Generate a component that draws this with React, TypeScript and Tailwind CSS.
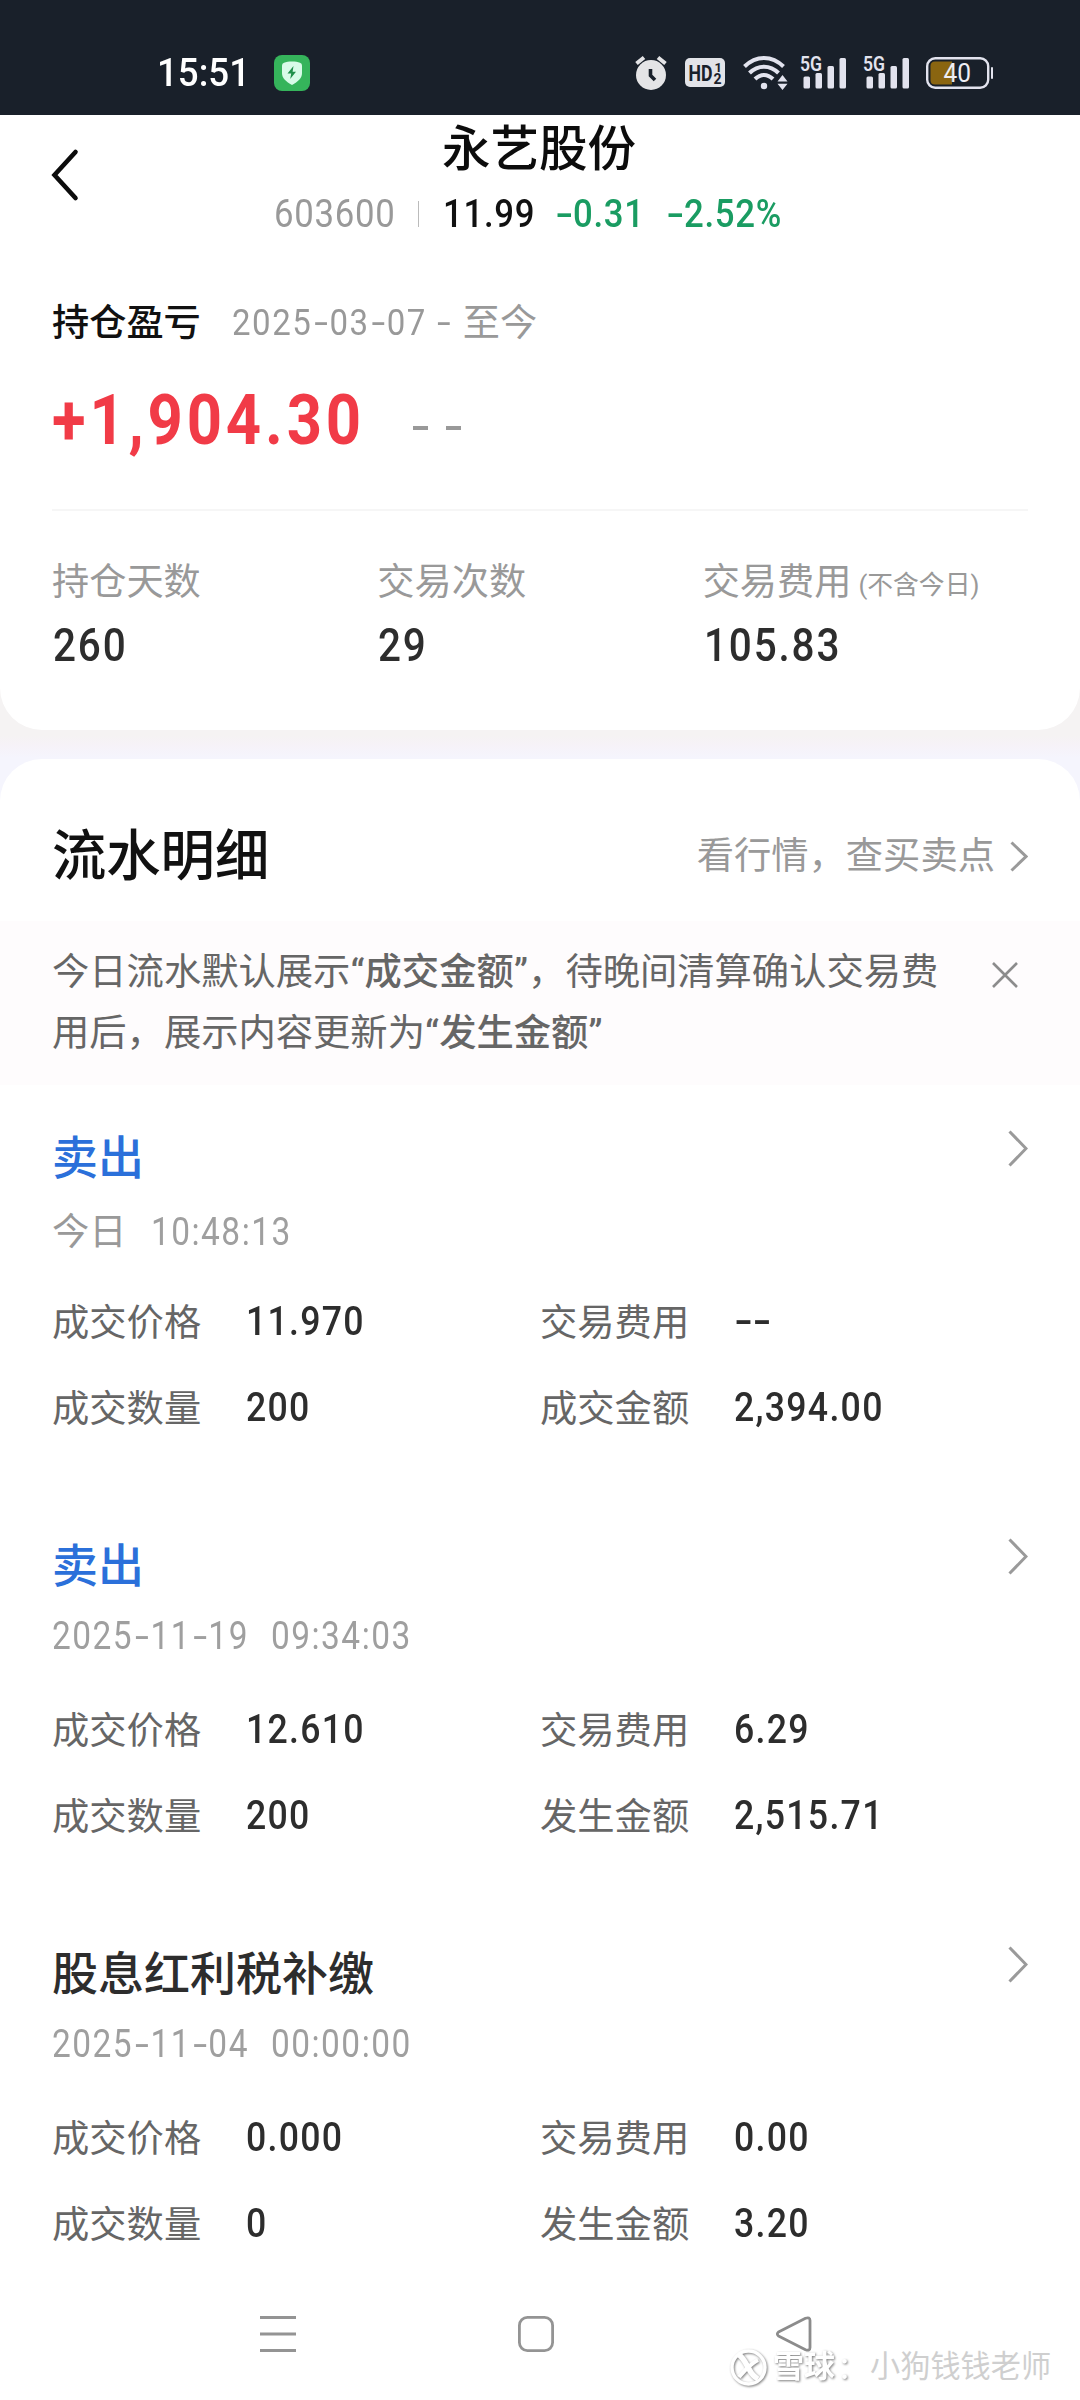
import React from "react";

const CJK = "font-['Roboto','Noto_Sans_CJK_SC',sans-serif]";

/* Condensed numerals, drawn from the left edge of their box; hyphens are widened to match the digits. */
function Num({ children, className = "" }: { children: string; className?: string }) {
  return (
    <span className={"block origin-left scale-x-[0.88] whitespace-nowrap font-['Roboto',sans-serif] " + className}>
      {children.split(/(-)/).map((part, i) =>
        part === "-" ? (
          <span key={i} className="inline-block w-[0.52em] text-center tracking-normal">
            <span className="inline-block scale-x-[1.5]">-</span>
          </span>
        ) : (
          part
        ),
      )}
    </span>
  );
}

function Chevron({ w, h, className = "" }: { w: number; h: number; className?: string }) {
  return (
    <svg width={w} height={h} viewBox={`0 0 ${w} ${h}`} fill="none" className={className}>
      <path d={`M1.5 1.5L${w - 2} ${h / 2}L1.5 ${h - 1.5}`} stroke="#9a9a9a" strokeWidth="3" />
    </svg>
  );
}

function Signal() {
  return (
    <svg width="46" height="42" viewBox="0 -6 46 42" fill="#e2e3ee" className="block">
      <text x="0" y="17" fontSize="20" fontWeight="600" fontFamily="Roboto, sans-serif" textLength="22" lengthAdjust="spacingAndGlyphs">5G</text>
      <rect x="3.5" y="22.5" width="6.5" height="12" rx="1.5" />
      <rect x="15.5" y="19" width="6.5" height="15.5" rx="1.5" />
      <rect x="27.5" y="12" width="6.5" height="22.5" rx="1.5" />
      <rect x="39.5" y="4" width="6.5" height="30.5" rx="1.5" />
    </svg>
  );
}

function StatusBar() {
  return (
    <header className="flex h-[115px] items-center bg-[#19202a] pl-[157px] pr-[86px] pt-[30px] text-white">
      <span className="block w-[117px] origin-left scale-x-[0.965] whitespace-nowrap text-[38px] font-medium leading-[56px]">15:51</span>
      <svg width="36" height="36" viewBox="0 0 36 36">
        <rect width="36" height="36" rx="8" fill="#35b45b" />
        <path d="M18 6.5C21 6.5 24 7 26 7.7Q28 8.4 28 10.5V18C28 23.5 24 26.5 18 30C12 26.5 8 23.5 8 18V10.5Q8 8.4 10 7.7C12 7 15 6.5 18 6.5Z" fill="#d8fbe8" />
        <path d="M19.5 11L13.5 18.5H17.2L16.2 24L22 16.7H18.6Z" fill="#1f8f4a" />
      </svg>
      <div className="ml-auto flex items-center">
        <svg width="32" height="36" viewBox="0 0 32 36" fill="none">
          <circle cx="16" cy="20" r="15" fill="#e4e4e6" />
          <path d="M1.5 8.5L9 2.5M30.5 8.5L23 2.5" stroke="#e4e4e6" strokeWidth="4" />
          <path d="M15.5 14V20.5L20 25" stroke="#19202a" strokeWidth="3.6" />
        </svg>
        <svg width="40" height="29" viewBox="0 0 40 29" className="ml-[18px]">
          <rect width="40" height="29" rx="5" fill="#e2e3e8" />
          <g fill="#19202a" fontFamily="Roboto, sans-serif" fontWeight="700">
            <text x="3.5" y="22.5" fontSize="22" textLength="24" lengthAdjust="spacingAndGlyphs">HD</text>
            <text x="29.5" y="14" fontSize="13">1</text>
            <text x="28.5" y="25.5" fontSize="14">2</text>
          </g>
        </svg>
        <svg width="45" height="35" viewBox="0 0 45 35" fill="none" className="ml-[18px]">
          <g stroke="#e2e3ee" strokeWidth="4">
            <path d="M1.5 11.5C13 0 29 0 40.5 11.5" />
            <path d="M6.5 18C15 9.5 27 9.5 35.5 18" />
            <path d="M12 24C17.5 18.5 24.5 18.5 30 24" />
          </g>
          <circle cx="21" cy="31" r="3.2" fill="#e2e3ee" />
          <path d="M39.5 20L44.5 26.5H34.5ZM39.5 35L44.5 28.8H34.5Z" fill="#e2e3ee" />
        </svg>
        <span className="mb-[8px] ml-[12px]"><Signal /></span>
        <span className="mb-[8px] ml-[17px]"><Signal /></span>
        <svg width="68" height="32" viewBox="0 0 68 32" className="ml-[17px]">
          <rect x="1.2" y="1.2" width="61" height="29.6" rx="8" fill="none" stroke="#e2e3ee" strokeWidth="2.4" />
          <path d="M9 4.5H26V27.5H9Q4.5 27.5 4.5 23V9Q4.5 4.5 9 4.5Z" fill="#8a6510" />
          <rect x="65" y="10" width="2" height="12" rx="1" fill="#e2e3ee" />
          <text x="17.5" y="25" fontSize="25.5" fill="#eeeef4" fontFamily="Roboto, sans-serif" textLength="27.5" lengthAdjust="spacingAndGlyphs">40</text>
        </svg>
      </div>
    </header>
  );
}

function StockHeader() {
  return (
    <div className="flex h-[150px]">
      <svg width="30" height="54" viewBox="0 0 30 54" fill="none" className="ml-[50px] mt-[33px] shrink-0">
        <path d="M25.5 4L4.5 27L25.5 50" stroke="#0c0c0c" strokeWidth="4.6" strokeLinecap="round" />
      </svg>
      <div className="flex-1">
        <h1 className="ml-[362px] h-[67px] pt-[3px] text-[48.5px] font-medium leading-[64px] text-[#0c0c0c]">永艺股份</h1>
        <div className="ml-[194px] flex h-[63px] items-center text-[39.5px] leading-[63px] tracking-[0.02em]">
          <Num className="w-[144px] text-[#999]">603600</Num>
          <i className="block h-[26px] w-px bg-[#bbb]" />
          <Num className="ml-[24px] w-[112px] font-medium text-[#111]">11.99</Num>
          <Num className="w-[111px] font-medium text-[#1a9c62]">-0.31</Num>
          <Num className="font-medium text-[#1a9c62]">-2.52%</Num>
        </div>
      </div>
    </div>
  );
}

function Stat({ label, note, value }: { label: string; note?: string; value: string }) {
  return (
    <div>
      <div className="flex h-[56px] items-center whitespace-nowrap text-[37.2px] leading-[56px] text-[#999]">
        {label}
        {note && <span className="ml-[7px] mt-[5px] text-[25.8px]">{note}</span>}
      </div>
      <Num className="ml-[1px] mt-[7px] text-[46px] font-medium leading-[56px] tracking-[0.045em] text-[#2d2d2d]">{value}</Num>
    </div>
  );
}

function Summary() {
  return (
    <section className="h-[615px] rounded-b-[42px] bg-white">
      <StockHeader />
      <div className="px-[52px]">
        <div className="flex h-[114px] items-center text-[37.2px]">
          <span className="pt-[3px] font-medium text-[#111]">持仓盈亏</span>
          <div className="ml-[31px] flex items-center text-[#999]">
            <Num className="w-[203px] text-[37.5px] tracking-[0.046em]">2025-03-07</Num>
            <Num className="w-[28px] text-[37.5px]">-</Num>
            <span className="pt-[3px]">至今</span>
          </div>
        </div>
        <div className="flex h-[130px] items-start text-[#f13b47]">
          <Num className="w-[361px] pt-px text-[70px] font-bold leading-[80px] tracking-[0.062em]">+1,904.30</Num>
          <div className="mt-[47px] flex gap-[18px]">
            <i className="block h-[4px] w-[15px] bg-[#999]" />
            <i className="block h-[4px] w-[15px] bg-[#999]" />
          </div>
        </div>
        <div className="h-[2px] bg-[#f6f6f6]" />
        <div className="grid grid-cols-3 pt-[43px]">
          <Stat label="持仓天数" value="260" />
          <Stat label="交易次数" value="29" />
          <Stat label="交易费用" note="(不含今日)" value="105.83" />
        </div>
      </div>
    </section>
  );
}

function Notice() {
  return (
    <div className="flex h-[164px] bg-[#fefcfd] pl-[52px] pt-[21px]">
      <p className="w-[940px] text-[37.3px] leading-[61px] text-[#666]">
        今日流水默认展示<b className="font-medium">“成交金额”</b>，待晚间清算确认交易费
        <br />
        用后，展示内容更新为<b className="font-medium">“发生金额”</b>
      </p>
      <svg width="26" height="26" viewBox="0 0 26 26" className="mt-[20px]" stroke="#8c8c8c" strokeWidth="2.6">
        <path d="M1 1L25 25M25 1L1 25" />
      </svg>
    </div>
  );
}

type Entry = { title: string; sell?: boolean; day: string; time: string; price: string; fee: string; qty: string; amountLabel: string; amount: string };

const ENTRIES: Entry[] = [
  { title: "卖出", sell: true, day: "今日", time: "10:48:13", price: "11.970", fee: "--", qty: "200", amountLabel: "成交金额", amount: "2,394.00" },
  { title: "卖出", sell: true, day: "2025-11-19", time: "09:34:03", price: "12.610", fee: "6.29", qty: "200", amountLabel: "发生金额", amount: "2,515.71" },
  { title: "股息红利税补缴", day: "2025-11-04", time: "00:00:00", price: "0.000", fee: "0.00", qty: "0", amountLabel: "发生金额", amount: "3.20" },
];

function Field({ label, value }: { label: string; value: string }) {
  return (
    <div className="flex h-[86px] items-center text-[37.3px] text-[#666]">
      <span className="w-[194px] pt-[2px]">{label}</span>
      <Num className="pb-[4px] text-[40.5px] font-medium tracking-[0.036em] text-[#2d2d2d]">{value}</Num>
    </div>
  );
}

function EntryRow({ e }: { e: Entry }) {
  const today = e.day === "今日";
  return (
    <article className="h-[408px] px-[52px] pt-[37px]">
      <div className="flex justify-between">
        <h3 className={"text-[46px] font-medium leading-[72px] " + (e.sell ? "text-[#2b70da]" : "text-[#2d2d2d]")}>{e.title}</h3>
        <Chevron w={20} h={37} className="mt-[8px]" />
      </div>
      <div className={"flex h-[56px] items-center text-[37.3px] text-[#999] " + (today ? "mt-[11px]" : "mt-[7px]")}>
        {today ? (
          <span className="w-[99px]">{e.day}</span>
        ) : (
          <Num className="w-[219px] pb-[2px] text-[38px] tracking-[0.044em] text-[#9f9f9f]">{e.day}</Num>
        )}
        <Num className="pb-[2px] text-[38px] tracking-[0.044em] text-[#9f9f9f]">{e.time}</Num>
      </div>
      <div className={"grid grid-cols-2 " + (today ? "mt-[19px]" : "mt-[23px]")}>
        <Field label="成交价格" value={e.price} />
        <Field label="交易费用" value={e.fee} />
        <Field label="成交数量" value={e.qty} />
        <Field label={e.amountLabel} value={e.amount} />
      </div>
    </article>
  );
}

function NavBar() {
  return (
    <nav className="flex items-center pl-[260px] pt-[7px]">
      <svg width="36" height="36" viewBox="0 0 36 36" fill="none" stroke="#949494" strokeWidth="3">
        <path d="M0 1.5H36M0 18H36M0 34.5H36" />
      </svg>
      <svg width="36" height="36" viewBox="0 0 36 36" fill="none" stroke="#949494" strokeWidth="2.8" className="ml-[222px]">
        <rect x="1.4" y="1.4" width="33.2" height="33.2" rx="8" />
      </svg>
      <svg width="36" height="36" viewBox="0 0 36 36" fill="none" stroke="#8c8c8c" strokeWidth="2.8" strokeLinejoin="round" className="ml-[222px]">
        <path d="M2.5 16L29.5 2.3Q34 0.6 34 4.5V31.5Q34 35.4 29.5 33.7L2.5 20Q0.2 18 2.5 16Z" />
      </svg>
    </nav>
  );
}

function Watermark() {
  return (
    <div className="absolute bottom-[10px] left-[730px] flex h-[46px] items-center whitespace-nowrap text-[30px]">
      <div className="flex items-center text-white [filter:drop-shadow(1.5px_1.5px_0.8px_rgba(0,0,0,0.5))]">
        <svg width="37" height="37" viewBox="0 0 37 37" fill="none" stroke="white">
          <circle cx="18.5" cy="18.5" r="16.5" strokeWidth="3.4" />
          <path d="M8 5C14 9 16 15 19 20C21 24 23 27 28 30" strokeWidth="5.5" />
          <path d="M28 11C22 14 15 21 9 28" strokeWidth="4" />
        </svg>
        <span className="ml-[6px] text-[31px] font-bold">雪球</span>
        <span className="ml-[2px] w-[30px]">：</span>
      </div>
      <span className="ml-[3px] text-[30.2px] text-[#cfcfcf]">小狗钱钱老师</span>
    </div>
  );
}

export default function App() {
  return (
    <div className={"relative h-[2400px] w-[1080px] overflow-hidden bg-white " + CJK}>
      <StatusBar />
      <div className="bg-[linear-gradient(to_bottom,#f5f3f3_0,#f5f3f3_620px,#f6f2f8_630px,#f5f5fd_643px,#f5f5fd_100%)]">
        <Summary />
        <main className="mt-[29px] h-[1641px] rounded-t-[42px] bg-white">
          <div className="flex h-[162px] items-center justify-between px-[52px] pt-[33px]">
            <h2 className="text-[54.3px] font-medium leading-[72px] text-[#111]">流水明细</h2>
            <div className="flex items-center gap-[15px] text-[37.3px] text-[#999]">
              <span>看行情，查买卖点</span>
              <Chevron w={18} h={31} />
            </div>
          </div>
          <Notice />
          {ENTRIES.map((e, i) => (
            <EntryRow key={i} e={e} />
          ))}
          <NavBar />
        </main>
      </div>
      <Watermark />
    </div>
  );
}
